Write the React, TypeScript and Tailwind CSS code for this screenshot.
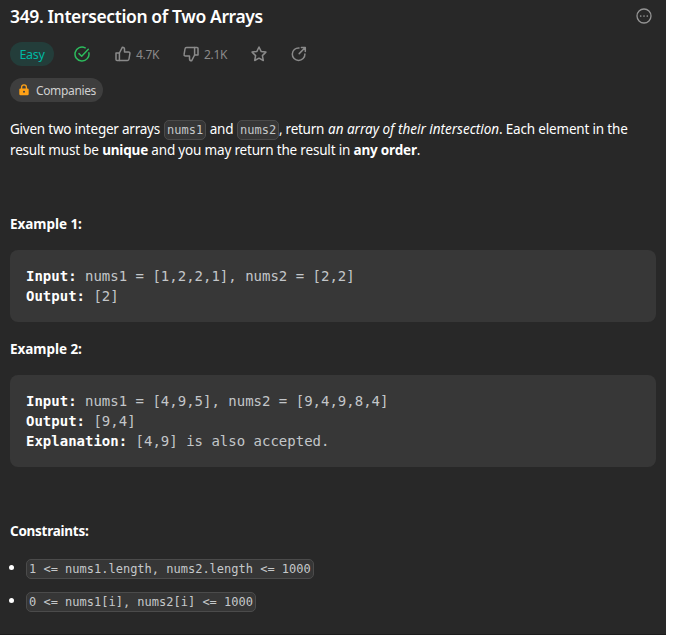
import type { ReactNode } from "react";

const sans = "font-['Noto_Sans','Open_Sans',sans-serif]";
const mono = "font-['DejaVu_Sans_Mono',monospace]";

function Icon({ className = "", children }: { className?: string; children: ReactNode }) {
  return (
    <svg
      className={`shrink-0 ${className}`}
      width="16"
      height="16"
      viewBox="0 0 16 16"
      fill="none"
      stroke="currentColor"
      strokeWidth="1.5"
      strokeLinecap="round"
      strokeLinejoin="round"
    >
      {children}
    </svg>
  );
}

function Code({ width, children }: { width: string; children: ReactNode }) {
  return (
    <code
      className={`${mono} ${width} box-border inline-flex h-5 shrink-0 items-center rounded-[5px] border border-[#4b4b4b] bg-[#363636] pl-0.5 align-middle text-[12px] leading-none tracking-normal whitespace-pre text-[#c5c8ca]`}
    >
      {children}
    </code>
  );
}

function Pre({ className, children }: { className: string; children: ReactNode }) {
  return (
    <pre className={`${mono} ${className} rounded-lg bg-[#373737] p-4 text-[14px] leading-5 text-[#c3c6c9]`}>
      {children}
    </pre>
  );
}

function Label({ children }: { children: ReactNode }) {
  return <strong className="font-bold text-white">{children}</strong>;
}

function Heading({ className, children }: { className: string; children: ReactNode }) {
  return (
    <h2 className={`${className} h-[21px] shrink-0 text-[13.5px] leading-[21px] font-bold whitespace-nowrap`}>
      {children}
    </h2>
  );
}

export default function App() {
  return (
    <div className="h-[635px] w-[695px] overflow-hidden bg-white">
      <main className={`${sans} flex h-full w-[666px] flex-col border-b border-[#1c1c1c] bg-[#282828] px-2.5 text-white`}>
        <header className="flex h-[34px] shrink-0 items-center justify-between">
          <h1 className="-mt-0.5 text-[17.5px] leading-6 font-semibold tracking-[-0.38px] whitespace-nowrap">
            349. Intersection of Two Arrays
          </h1>
          <Icon className="mr-1 -mt-0.5 text-[#949494]">
            <circle cx="8" cy="8" r="7" strokeWidth="1.3" />
            <path d="M4.7 8h.01M8 8h.01M11.3 8h.01" strokeWidth="1.7" />
          </Icon>
        </header>

        <div className="mt-2 flex h-6 shrink-0 items-center text-[12px] tracking-[-0.3px] text-[#8a8a8a]">
          <span className="flex h-6 w-11 items-center justify-center rounded-full bg-[#233d3a] pt-0.5 text-[12.5px] text-[#00b8a3]">
            Easy
          </span>
          <Icon className="ml-5 text-[#2cbb5d]">
            <path d="M14.9 6.8A7 7 0 1 1 11.2 1.8" />
            <path d="M5 7.6l2.7 2.7 6.6-7" />
          </Icon>
          <Icon className="ml-[25px]">
            <path d="M1 7h3.4v7.4H2a1 1 0 0 1-1-1z" />
            <path d="M4.4 7l3-5.8c1.3 0 2.1.8 2.1 2.1v2.6h4c1 0 1.6.8 1.4 1.7l-.9 5.4c-.1.8-.7 1.4-1.5 1.4H4.4" />
          </Icon>
          <span className="ml-[5px] w-[23px] pt-0.5">4.7K</span>
          <Icon className="ml-6">
            <path d="M15 9h-3.4V1.6H14a1 1 0 0 1 1 1z" />
            <path d="M11.6 9l-3 5.8c-1.3 0-2.1-.8-2.1-2.1v-2.6h-4c-1 0-1.6-.8-1.4-1.7L2 3c.1-.8.7-1.4 1.5-1.4h8.1" />
          </Icon>
          <span className="ml-[5px] w-[23px] pt-0.5">2.1K</span>
          <Icon className="ml-6">
            <path d="M8 1l2.1 4.4 4.8.7-3.5 3.5.9 4.9L8 12.2l-4.3 2.3.9-4.9L1.1 6.1l4.8-.7z" />
          </Icon>
          <Icon className="ml-6">
            <path d="M8 1.9A6.3 6.3 0 1 0 13.9 8" />
            <path d="M10.4 1.5h3.9v3.9M14 1.8L8.2 7.6" />
          </Icon>
        </div>

        <div className="mt-3 flex h-6 w-[93px] shrink-0 items-center rounded-full bg-[#3e3e3e] pl-[9px] text-[12px] tracking-[-0.36px] text-[#d0d0d0]">
          <svg className="mr-[7px] shrink-0" width="10" height="12" viewBox="0 0 10 12" fill="none">
            <path d="M2.6 5V3.3a2.4 2.4 0 0 1 4.8 0V5" stroke="#ffa116" strokeWidth="1.3" />
            <rect x="0.3" y="4.6" width="9.4" height="6.6" rx="1.2" fill="#ffa116" />
            <circle cx="5" cy="7.8" r="1" fill="#3e3e3e" />
          </svg>
          <span className="pt-0.5">Companies</span>
        </div>

        <div className="mt-[17px] h-[42px] shrink-0 text-[13.5px] tracking-[-0.18px] whitespace-nowrap">
          <p className="flex h-[21px] items-center leading-[21px]">
            <span className="w-[154px] tracking-[-0.23px]">Given two integer arrays</span>
            <Code width="w-[42px]">nums1</Code>
            <span className="w-[31px] text-center">and</span>
            <Code width="w-[42px]">nums2</Code>
            <span className="w-[49px] tracking-[-0.26px]">, return</span>
            <em className="w-[171px] tracking-[-0.01px]">an array of their intersection</em>
            <span>. Each element in the</span>
          </p>
          <p className="h-[21px] leading-[21px]">
            result must be <strong>unique</strong> and you may return the result in <strong>any order</strong>.
          </p>
        </div>

        <Heading className="mt-[53px] tracking-[-0.04px]">Example 1:</Heading>
        <Pre className="mt-[15px] h-[72px] shrink-0">
          <Label>Input:</Label>{" nums1 = [1,2,2,1], nums2 = [2,2]\n"}
          <Label>Output:</Label>{" [2]"}
        </Pre>
        <Heading className="mt-[17px] tracking-[-0.04px]">Example 2:</Heading>
        <Pre className="mt-[15px] h-[92px] shrink-0">
          <Label>Input:</Label>{" nums1 = [4,9,5], nums2 = [9,4,9,8,4]\n"}
          <Label>Output:</Label>{" [9,4]\n"}
          <Label>Explanation:</Label>{" [4,9] is also accepted."}
        </Pre>
        <Heading className="mt-[54px] tracking-[-0.26px]">Constraints:</Heading>

        <ul className="mt-[17px] flex flex-col gap-[13px]">
          <li className="flex h-5 items-center">
            <span className="mr-3 -ml-px -mt-[3px] size-[5px] rounded-full bg-white" />
            <Code width="w-[288px]">{"1 <= nums1.length, nums2.length <= 1000"}</Code>
          </li>
          <li className="flex h-5 items-center">
            <span className="mr-3 -ml-px -mt-[3px] size-[5px] rounded-full bg-white" />
            <Code width="w-[230px]">{"0 <= nums1[i], nums2[i] <= 1000"}</Code>
          </li>
        </ul>
      </main>
    </div>
  );
}
